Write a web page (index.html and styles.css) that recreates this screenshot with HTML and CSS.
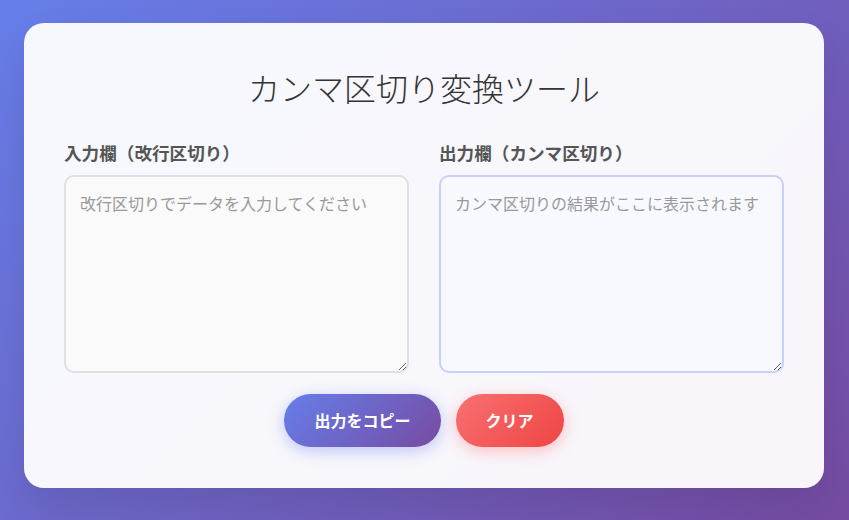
FILE: index.html
```html
<!DOCTYPE html>
<html lang="ja">
<head>
<meta charset="utf-8">
<title>カンマ区切り変換ツール</title>
<link rel="stylesheet" href="styles.css">
</head>
<body>
<div class="container">
  <h1 class="title">カンマ区切り変換ツール</h1>
  <div class="panels">
    <div class="panel">
      <label class="label" for="input">入力欄（改行区切り）</label>
      <textarea id="input" class="area area-input" placeholder="改行区切りでデータを入力してください"></textarea>
    </div>
    <div class="panel">
      <label class="label" for="output">出力欄（カンマ区切り）</label>
      <textarea id="output" class="area area-output" placeholder="カンマ区切りの結果がここに表示されます" readonly></textarea>
    </div>
  </div>
  <div class="buttons">
    <button class="btn btn-copy">出力をコピー</button>
    <button class="btn btn-clear">クリア</button>
  </div>
</div>
</body>
</html>
```
FILE: styles.css
```css
* { box-sizing: border-box; }
html, body { margin: 0; }
body {
  font-family: "Noto Sans CJK JP", "Noto Sans", sans-serif;
  background: linear-gradient(135deg, #667eea 0%, #764ba2 100%);
  min-height: 100vh;
  padding: 23px 25px 20px 24px;
}
.container {
  max-width: 800px;
  background: rgba(255, 255, 255, 0.95);
  border-radius: 20px;
  padding: 40px 40px 41px;
  box-shadow: 0 20px 40px rgba(0, 0, 0, 0.1);
}
.title {
  margin: 0 0 30px;
  text-align: center;
  font-size: 32px;
  line-height: 48px;
  font-weight: 300;
  color: #333;
}
.panels {
  display: grid;
  grid-template-columns: 1fr 1fr;
  gap: 30px;
}
.panel { display: flex; flex-direction: column; }
.label {
  font-weight: 700;
  font-size: 17.6px;
  line-height: 24px;
  color: #555;
  margin-bottom: 10px;
}
.area {
  display: block;
  width: 100%;
  height: 198px;
  padding: 14px;
  border: 2px solid #e0e0e0;
  border-radius: 10px;
  font-family: "Noto Sans CJK JP", "Noto Sans", sans-serif;
  font-size: 16px;
  line-height: 24px;
  color: #333;
  background: #fafafa;
  outline: none;
}
.area::placeholder { color: #999; }
.area-output {
  background: #f8f9ff;
  border-color: #c5d0fb;
}
.buttons {
  display: flex;
  justify-content: center;
  gap: 15px;
  margin-top: 21px;
}
.btn {
  border: none;
  border-radius: 50px;
  padding: 15px 30px;
  font-family: "Noto Sans CJK JP", "Noto Sans", sans-serif;
  font-size: 16px;
  line-height: 23px;
  font-weight: 700;
  color: #fff;
  cursor: pointer;
}
.btn-copy {
  background: linear-gradient(135deg, #667eea 0%, #764ba2 100%);
  box-shadow: 0 4px 15px rgba(102, 126, 234, 0.4);
}
.btn-clear {
  background: linear-gradient(135deg, #f87171 0%, #ef4444 100%);
  box-shadow: 0 4px 15px rgba(255, 107, 107, 0.4);
}
```
